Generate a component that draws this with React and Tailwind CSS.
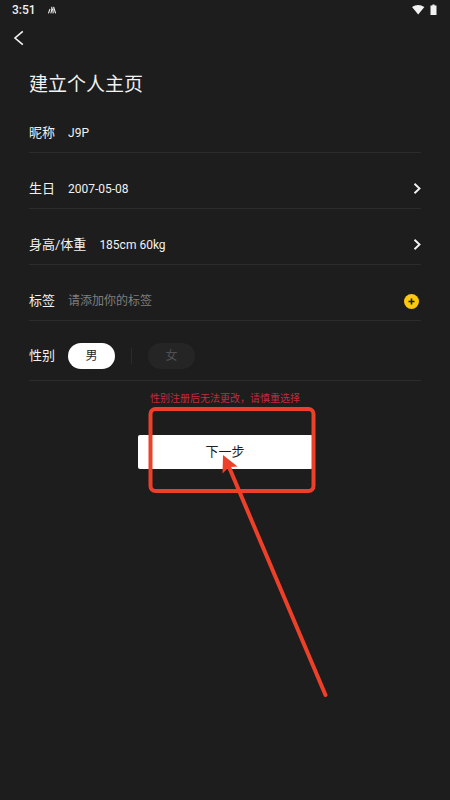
import React, { useState } from 'react';

const StatusBar = () => (
  <div className="flex h-5 items-center justify-between pl-3 pr-3">
    <div className="flex items-center gap-3">
      <span className="text-[12px] font-medium leading-4">3:51</span>
      <svg className="h-2 w-2" viewBox="0 0 8 8" fill="none" stroke="currentColor" strokeWidth="1.1">
        <path d="M2 3 0.4 7.4M3.8 0.8v3L2.8 7.4M4.8 2.6 5.2 7.4M5.6 0.8 7.6 7.4" />
      </svg>
    </div>
    <div className="flex items-center gap-1">
      <svg className="h-4 w-4" viewBox="0 0 16 16" fill="currentColor">
        <path d="M2 5Q8 0.8 14.400 5L8.200 12.400Z" />
      </svg>
      <svg className="h-3 w-2" viewBox="0 0 8 12" fill="currentColor">
        <path d="M2.400 0.500h2.200v1H6.500v9.500H0.500V1.500h1.900z" />
      </svg>
    </div>
  </div>
);

const Chevron = () => (
  <svg className="h-3 w-2" viewBox="0 0 8 12" fill="none" stroke="currentColor" strokeWidth="1.9">
    <path d="M1.500 0.800 6.500 5.500 1.500 10.200" />
  </svg>
);

const Row = ({ id, label, children }) => (
  <div className="flex h-14 items-center gap-[13px] border-b border-[#2c2c2d] pt-4">
    <label className="shrink-0 text-[13px] leading-5" htmlFor={id}>{label}</label>
    {children}
  </div>
);

const genders = [
  { value: 'male', label: '男' },
  { value: 'female', label: '女' },
];

const App = () => {
  const [formData, setFormData] = useState({
    nickname: 'J9P',
    tags: '',
    gender: 'male',
  });

  const handleChange = (e) => {
    setFormData({ ...formData, [e.target.name]: e.target.value });
  };

  const handleSubmit = (e) => {
    e.preventDefault();
  };

  return (
    <div className="min-h-screen overflow-hidden bg-[#1d1d1d] font-[Roboto,'Noto_Sans_CJK_SC',sans-serif] text-[#f2f2f2]">
      <StatusBar />
      <button className="flex h-9 w-9 items-center justify-center" type="button" aria-label="返回">
        <svg className="h-4 w-3" viewBox="0 0 12 16" fill="none" stroke="currentColor" strokeWidth="1.6">
          <path d="M10.800 1.400 3 8l7.800 6.600" />
        </svg>
      </button>

      <form className="px-[29px]" onSubmit={handleSubmit}>
        <h1 className="pt-[17px] text-[19px] leading-6">建立个人主页</h1>

        <Row id="nickname" label="昵称">
          <input className="min-w-0 grow bg-transparent text-xs outline-none" id="nickname" type="text" name="nickname" value={formData.nickname} onChange={handleChange} />
        </Row>
        <Row id="birthday" label="生日">
          <button className="flex grow items-center justify-between text-xs" id="birthday" type="button">
            2007-05-08
            <Chevron />
          </button>
        </Row>
        <Row id="body" label="身高/体重">
          <button className="flex grow items-center justify-between text-xs" id="body" type="button">
            185cm 60kg
            <Chevron />
          </button>
        </Row>
        <Row id="tags" label="标签">
          <input className="min-w-0 grow bg-transparent text-xs outline-none placeholder:text-[#7f7f7f]" id="tags" type="text" name="tags" placeholder="请添加你的标签" value={formData.tags} onChange={handleChange} />
          <button className="pr-px" type="button" aria-label="添加标签">
            <svg className="h-4 w-4" viewBox="0 0 16 16">
              <circle cx="7.500" cy="8.500" r="7.500" fill="#fbc70f" />
              <path d="M7.500 5.500v6M4.500 8.500h6" stroke="#1d1d1d" strokeWidth="1.6" />
            </svg>
          </button>
        </Row>

        <fieldset className="flex h-15 items-center border-b border-[#2c2c2d] pt-[11px]" aria-labelledby="gender">
          <span className="mr-[13px] text-[13px] leading-5" id="gender">性别</span>
          {genders.map(({ value, label }, i) => (
            <React.Fragment key={value}>
              {i > 0 && <span className="mx-4 h-4 w-px bg-[#2a2a2a]" />}
              <label className="flex h-[26px] w-[47px] items-center justify-center rounded-full bg-[#252525] text-xs text-[#505055] has-checked:bg-white has-checked:text-[#1d1d1d]">
                <input className="sr-only" type="radio" name="gender" value={value} checked={formData.gender === value} onChange={handleChange} />
                {label}
              </label>
            </React.Fragment>
          ))}
        </fieldset>

        <p className="pt-2 text-center text-[10px] leading-5 text-[#c4293f]">性别注册后无法更改，请慎重选择</p>

        <div className="relative mx-auto mt-[26px] w-[175px]">
          <button className="block h-[34px] w-full rounded-xs bg-white text-[13px] text-[#1d1d1d]" type="submit">
            下一步
          </button>
          {/* highlight around the button, with the arrow that points at it */}
          <svg className="pointer-events-none absolute left-0 -top-8 h-[300px] w-[200px]" viewBox="0 0 200 300" fill="none" stroke="#ee4028" strokeWidth="4">
            <rect x="12.500" y="6" width="163" height="82" rx="5" />
            <path d="M91 64 187.500 292" strokeLinecap="round" />
            <path d="M85 52 99.500 63.500 92.500 64 89 66 84.500 70.500Z" fill="#ee4028" stroke="none" />
          </svg>
        </div>
      </form>
    </div>
  );
};

export default App;
